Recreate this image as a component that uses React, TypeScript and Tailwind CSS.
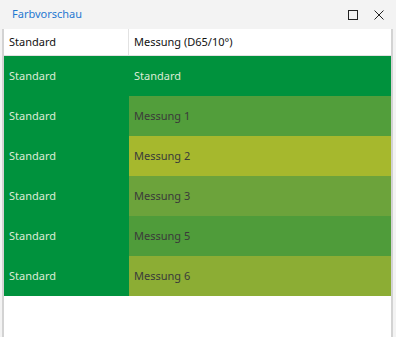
import React from 'react';

interface Row {
  standard: string;
  messung: string;
  color: string;
  dark: boolean;
}

const rows: Row[] = [
  { standard: 'Standard', messung: 'Standard', color: '#00923d', dark: false },
  { standard: 'Standard', messung: 'Messung 1', color: '#529e3b', dark: true },
  { standard: 'Standard', messung: 'Messung 2', color: '#a6b82d', dark: true },
  { standard: 'Standard', messung: 'Messung 3', color: '#6ca33b', dark: true },
  { standard: 'Standard', messung: 'Messung 5', color: '#4f9c3a', dark: true },
  { standard: 'Standard', messung: 'Messung 6', color: '#8cad34', dark: true },
];

const App: React.FC = () => {
  return (
    <div
      className="w-[396px] h-[337px] bg-[#f3f3f3] flex flex-col overflow-hidden text-[11px]"
      style={{ fontFamily: '"Noto Sans", "Open Sans", sans-serif' }}
    >
      {/* title bar */}
      <div className="h-[29px] flex items-center pl-3 pr-[14px]">
        <span className="text-[#1f78d1] flex-1">Farbvorschau</span>
        <div className="flex items-center gap-[16px] mr-[-2px]">
          <svg width="10" height="10" viewBox="0 0 10 10">
            <rect x="0.5" y="0.5" width="9" height="9" fill="none" stroke="#222" strokeWidth="1" />
          </svg>
          <svg width="10" height="10" viewBox="0 0 10 10">
            <path d="M0.5 0.5 L9.5 9.5 M9.5 0.5 L0.5 9.5" stroke="#222" strokeWidth="1" />
          </svg>
        </div>
      </div>

      {/* grid */}
      <div className="flex-1 ml-[2px] mr-[3px] border-x-2 border-[#d3d3d3] bg-white flex flex-col">
        <div className="h-[27px] flex border-b border-[#e2e2e2] text-[#111]">
          <div className="w-[125px] flex items-center pl-[5px] border-r border-[#e2e2e2]">Standard</div>
          <div className="flex-1 flex items-center pl-[5px]">Messung (D65/10°)</div>
        </div>
        {rows.map((row, i) => (
          <div key={i} className="h-[40px] flex">
            <div className="w-[125px] flex items-center pl-[5px] bg-[#00923d] text-[#dcebd6]">
              {row.standard}
            </div>
            <div
              className={`flex-1 flex items-center pl-[5px] ${row.dark ? 'text-[#3a3a3a]' : 'text-[#dcebd6]'}`}
              style={{ backgroundColor: row.color }}
            >
              {row.messung}
            </div>
          </div>
        ))}
      </div>
    </div>
  );
};

export default App;
